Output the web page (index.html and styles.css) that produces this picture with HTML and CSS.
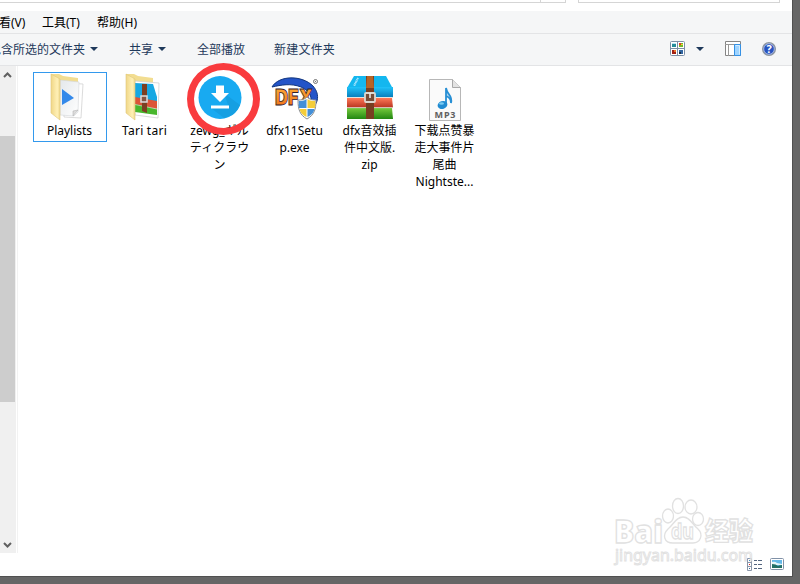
FILE: index.html
```
<!DOCTYPE html>
<html lang="zh-CN">
<head>
<meta charset="utf-8">
<title>Playlists</title>
<link rel="stylesheet" href="styles.css">
</head>
<body>
<div class="window">
  <header class="address"><div class="path"><i></i></div><div class="search"></div></header>
  <nav class="menu"><span class="view">看(V)</span><span class="tools">工具(T)</span><span>帮助(H)</span></nav>
  <div class="toolbar">
    <span class="include">包含所选的文件夹</span><b class="arrow"></b>
    <span class="share">共享</span><b class="arrow"></b>
    <span class="play">全部播放</span><span class="new">新建文件夹</span>
    <div class="tools-right">
      <svg width="15" height="15" viewBox="0 0 15 15"><rect x=".5" y=".5" width="14" height="14" rx="1" fill="#fff" stroke="#7c8ea5"/><path d="M7.5 0v15M0 7.5h15" stroke="#7c8ea5"/><path d="M2 3h4v3H2z" fill="#278b98"/><path d="M2 2h4v1H2z" fill="#b9e4f5"/><path d="M9 2h4v4H9z" fill="#74b72b"/><path d="M9 2h2v2H9z" fill="#e43b27"/><path d="M11 3h2v1h-2z" fill="#eddb37"/><path d="M2 9h4v4H2z" fill="#a02015"/><path d="M4 9h2v2H4z" fill="#ed742b"/><path d="M9 9h4v4H9z" fill="#3266a2"/><path d="M9 11h2v2H9z" fill="#192e49"/></svg>
      <b class="arrow"></b>
      <svg class="pane" width="16" height="15" viewBox="0 0 16 15"><path d="M.5.5h15v14H.5z" fill="#fff" stroke="#858585"/><path d="M0 3.5h16M3.5 3v12" stroke="#999"/><path d="M9.5 3.5h6v11h-6z" fill="#9fd4ff" stroke="#3591e5"/><path d="M10.500 4.500h4v9" fill="none" stroke="#d3edff"/></svg>
      <svg width="14" height="14" viewBox="0 0 14 14"><circle cx="7" cy="7" r="6.300" fill="#2853bf" stroke="#8f969f" stroke-width="1.400"/><circle cx="7" cy="7" r="5.300" fill="none" stroke="#d1dcf3" stroke-width=".7"/><text x="7" y="11" text-anchor="middle" class="help">?</text></svg>
    </div>
  </div>
  <div class="content">
    <aside class="scroll">
      <svg width="15" height="20"><path d="M4 11 7.500 7.500 11 11" class="chevron"/></svg>
      <div class="thumb"></div>
      <svg class="down" width="15" height="20"><path d="M4 10 7.500 13.500 11 10" class="chevron"/></svg>
    </aside>
    <main class="files">
      <div class="file selected">
        <svg class="icon" viewBox="0 0 48 48"><defs><linearGradient id="folder"><stop stop-color="#f0d787"/><stop offset=".7" stop-color="#fff0b6"/><stop offset="1" stop-color="#f0d98c"/></linearGradient><linearGradient id="paper" x2="1" y2="1"><stop stop-color="#e4e8eb"/><stop offset="1" stop-color="#fff"/></linearGradient></defs><path d="M5 2h8l4 2 15 2v33L14 42z" fill="#f2dd91"/><path d="m18 11 19 1-2 34-17-1z" fill="#fff" stroke="#ccc" stroke-width=".7"/><path d="m14 8 19 2-1 30-4 4-14-1z" fill="url(#paper)" stroke="#d2d5d8" stroke-width=".6"/><path d="m32 38-5 1v5z" fill="#ddd" stroke="#aaa" stroke-width=".5"/><path d="m16 17 12 9-12 7z" fill="#3389ea"/><path d="M5 2 14 7v41L5 41z" fill="url(#folder)" stroke="#dfc77c" stroke-width=".6"/></svg>
        <div class="name">Playlists</div>
      </div>
      <div class="file">
        <svg class="icon" viewBox="0 0 48 48"><path d="M5 2h8l4 2 15 2v33L14 42z" fill="#f2dd91"/><path d="m14 9 24 2-1 35-23-3z" fill="#fff" stroke="#ccc" stroke-width=".7"/><path d="m14 11 18 1 4 13v5l-22-3z" fill="#17a8e3"/><path d="m14 25 22 4v8l-22-3z" fill="#dc5438"/><path d="m14 32 22 5v6l-22-3z" fill="#48b62c"/><path d="M14 32.500l22 4.500" stroke="#ddd" fill="none" stroke-width=".7"/><path d="m21 12 5 0v29l-5-2z" fill="#7c3f22"/><rect x="20" y="24" width="6" height="6" fill="#845545" stroke="#ddd" stroke-width="1.500"/><path d="M5 2 14 7v41L5 41z" fill="url(#folder)" stroke="#dfc77c" stroke-width=".6"/></svg>
        <div class="name wide">Tari tari</div>
      </div>
      <div class="file">
        <svg class="icon" viewBox="0 0 48 48"><circle cx="24" cy="25.500" r="21.500" fill="#18aaf1"/><path d="m28 21 16 12a21 21 0 0 1-16 13L15 36h18z" fill="#159fe2"/><path d="M20 13.500h8V21h5l-9 9-9-9h5zM15 33.500h18v3H15z" fill="#fff"/></svg>
        <div class="name">zewg_ギル<br>ティクラウ<br>ン</div>
        <div class="ring"></div>
      </div>
      <div class="file">
        <svg class="icon" viewBox="0 0 48 48"><defs><linearGradient id="orange" x2="0" y2="1"><stop stop-color="#ffb43b"/><stop offset="1" stop-color="#ed6817"/></linearGradient></defs><path d="M1 15C8 3 31 3 42 14c8 9 5 20-5 25 6-12 3-20-7-24C20 11 10 13 1 15z" fill="#2354c8" stroke="#12367e"/><text x="4" y="33" textLength="38" lengthAdjust="spacingAndGlyphs" class="dfx">DFX</text><circle cx="44.500" cy="9.500" r="2" fill="none" stroke="#555" stroke-width=".8"/><circle cx="44.500" cy="9.500" r=".7" fill="#777"/><path d="M36 25c3 3 6 3 9 3 0 10-2 15-9 19-7-4-9-9-9-19 3 0 6 0 9-3z" fill="#fff" stroke="#8c8f91"/><path d="M35.500 27v9H28q-.5-3-.2-7c3 0 5 0 7.700-2z" fill="#438fd8"/><path d="M36.500 27v9H44q.5-3 .2-7c-3 0-5 0-7.700-2zM35.500 37v8c-4-2-6-4-7-8z" fill="#f4cd3a"/><path d="M36.500 37v8c4-2 6-4 7-8z" fill="#438fd8"/></svg>
        <div class="name">dfx11Setu<br>p.exe</div>
      </div>
      <div class="file">
        <svg class="icon" viewBox="0 0 48 48"><defs><linearGradient id="blue" x2="0" y2="1"><stop stop-color="#20c3fa"/><stop offset="1" stop-color="#087fbd"/></linearGradient><linearGradient id="red" x2="0" y2="1"><stop stop-color="#ff7857"/><stop offset="1" stop-color="#b83521"/></linearGradient><linearGradient id="green" x2="0" y2="1"><stop stop-color="#76ca3d"/><stop offset="1" stop-color="#228712"/></linearGradient></defs><path d="M8 4h32l6.500 12H1z" fill="#14b7ef"/><path d="M1 15h46v10H1z" fill="url(#blue)"/><path d="M1 26h45l1 9.500H1z" fill="url(#red)"/><path d="M1 36h45l1 11H1z" fill="url(#green)"/><path d="M1 25.500h46M1 35.700h46" stroke="#d9d7cf" stroke-width=".7"/><path d="M20 4h8v43h-8z" fill="#783e21"/><path d="M21 4h6l1 12h-8z" fill="#b66327"/><path d="m12 6-4 8" stroke="#bcecff" stroke-width="2" stroke-dasharray="1 .5"/><rect x="19" y="21" width="10" height="9" rx="1" fill="#784c38" stroke="#ded8d1" stroke-width="1.800"/><path d="M24 21v5" stroke="#eee" stroke-width="1.500"/></svg>
        <div class="name">dfx音效插<br>件中文版.<br>zip</div>
      </div>
      <div class="file">
        <svg class="icon" viewBox="0 0 48 48"><path d="M8.500 7.500h23l8 8v33h-31z" fill="#fafafa" stroke="#b7b7b7"/><path d="M31.500 7.500v8h8" fill="#e3e3e3" stroke="#a8a8a8"/><path d="M25 32V16c1 7 7 7 5 15 0-4-2-6-5-7" fill="#278fd4" fill-opacity=".35" stroke="#278fd4" stroke-width="1.800"/><ellipse cx="21.500" cy="33" rx="5" ry="3.900" fill="#218bd1" transform="rotate(-18 21.500 33)"/><ellipse cx="20.500" cy="31.500" rx="2.500" ry="1.300" fill="#7acbf3"/><text x="13.500" y="46" textLength="21" class="mp3">MP3</text></svg>
        <div class="name">下载点赞暴<br>走大事件片<br>尾曲<br>Nightste...</div>
      </div>
    </main>
  </div>
  <footer class="status">
    <svg width="16" height="13" viewBox="0 0 16 13"><path d="M.5.5h4v12h-4zM0 4.500h5M0 8.500h5" fill="#fff" stroke="#8995a8"/><path d="M2 2h1v1H2zM2 10h1v1H2z" fill="#356b95"/><path d="M2 6h1v1H2z" fill="#d22"/><path d="M7 2.500h3m1 0h4m-8 4h3m1 0h4m-8 4h3m1 0h4" stroke="#53657f"/></svg>
    <svg width="14" height="12" viewBox="0 0 14 12"><rect x=".5" y=".5" width="13" height="11" rx="1" fill="#fff" stroke="#8091a7"/><path d="M2 2h10v8H2z" fill="#64b8e7"/><path d="M2 4q3-1 5 1l5 1v1H2z" fill="#e4f5fa"/><path d="M2 6q4 0 6 2 2-1 4-1v3H2z" fill="#236f65"/></svg>
  </footer>
  <svg class="watermark" width="160" height="76" viewBox="0 0 160 76">
    <g fill="#fff" stroke="#dcdcdc" stroke-width="1.300">
      <text x="4" y="47" textLength="49" lengthAdjust="spacingAndGlyphs" class="logo">Bai</text>
      <ellipse cx="58" cy="20" rx="5.500" ry="7"/><ellipse cx="68" cy="10" rx="5.500" ry="7.500"/><ellipse cx="81" cy="11" rx="6" ry="7"/><ellipse cx="88" cy="23" rx="5.500" ry="6.500"/>
      <path d="M73 21c7 0 9 7 15 12 6 6 2 14-5 14H63c-9 0-11-8-5-14 6-5 8-12 15-12z"/>
      <text x="61" y="43" textLength="23" lengthAdjust="spacingAndGlyphs" class="du">du</text>
      <text x="95" y="44" textLength="48" lengthAdjust="spacingAndGlyphs" class="jy">经验</text>
      <text x="5" y="65" textLength="138" lengthAdjust="spacingAndGlyphs" class="url">jingyan.baidu.com</text>
    </g>
  </svg>
</div>
</body>
</html>
```
FILE: styles.css
```
* { box-sizing: border-box; }
body { margin: 0; width: 800px; height: 584px; overflow: hidden; background: #666; font: 12px/17px "Noto Sans", "Noto Sans CJK SC", sans-serif; color: #000; }
svg { display: block; flex: none; }
.window { position: relative; display: flex; flex-direction: column; width: 792px; height: 576px; background: #fff; outline: 1px solid #505050; }
.address { display: flex; gap: 12px; height: 11px; }
.path, .search { height: 3px; border: solid #d5d5d5; border-width: 0 1px 1px 0; }
.path { width: 566px; }
.path i { display: block; width: 541px; height: 2px; border-right: 1px solid #d5d5d5; }
.search { width: 202px; border-left-width: 1px; }
.menu { display: flex; align-items: center; height: 23px; background: #f5f6f7; border-bottom: 1px solid #e3e4e6; white-space: nowrap; }
.menu .view { width: 43px; margin-left: -1px; }
.menu .tools { width: 55px; }
.toolbar { display: flex; align-items: center; height: 32px; background: #f5f6f7; border-bottom: 1px solid #e3e4e6; color: #1e395b; white-space: nowrap; }
.toolbar span { height: 18px; }
.toolbar .include { width: 96px; margin-left: -11px; }
.arrow { width: 0; height: 0; margin: 0 0 1px 5px; border: solid transparent; border-width: 4px 4px 0; border-top-color: #1e395b; }
.share { margin-left: 31px; }
.play { margin-left: 31px; }
.new { margin-left: 29px; letter-spacing: .2px; }
.help { font: bold 11px "Noto Sans", sans-serif; fill: #fff; }
.tools-right { display: flex; align-items: center; margin: 0 16px 1px auto; }
.tools-right svg:first-child { margin-top: -1px; }
.tools-right .arrow { margin-left: 11px; }
.pane { margin: -1px 21px 0; }
.content { display: flex; height: 487px; }
.scroll { display: flex; flex-direction: column; width: 18px; background: #f0f0f0; border-right: 1px solid #f2f2f2; box-shadow: inset -1px 0 #fff; }
.chevron { fill: none; stroke: #606060; stroke-width: 2; }
.thumb { width: 15px; height: 266px; margin-top: 50px; background: #cdcdcd; }
.down { margin-top: auto; }
.files { display: flex; align-items: flex-start; padding: 6px 0 0 14px; }
.file { position: relative; width: 75px; height: 70px; flex: none; text-align: center; white-space: nowrap; }
.selected::before { content: ""; position: absolute; box-sizing: border-box; left: 1px; top: 0; width: 74px; height: 70px; border: 1px solid #3399ed; }
.icon { width: 48px; height: 48px; margin: 0 auto 2px 14px; overflow: visible; }
.wide { letter-spacing: .25px; }
.dfx { font: 900 22px Inter, sans-serif; fill: url(#orange); stroke: #30202c; stroke-width: .8; }
.mp3 { font: bold 9px "Noto Sans", sans-serif; fill: #606060; }
.ring { position: absolute; left: 5px; top: -9px; width: 73px; height: 72px; border: 7px solid #f93b3e; border-radius: 50%; }
.status { display: flex; align-items: center; justify-content: flex-end; gap: 7px; height: 23px; padding: 0 8px 1px 0; }
.watermark { position: absolute; left: 610px; top: 496px; opacity: .85; }
.logo { font: 900 31px "Noto Sans", sans-serif; }
.du { font: bold 22px "Noto Sans", sans-serif; }
.jy { font: 900 25px "Noto Sans CJK SC", sans-serif; }
.url { font: 17px "Noto Sans", sans-serif; stroke-width: 1; }
```
